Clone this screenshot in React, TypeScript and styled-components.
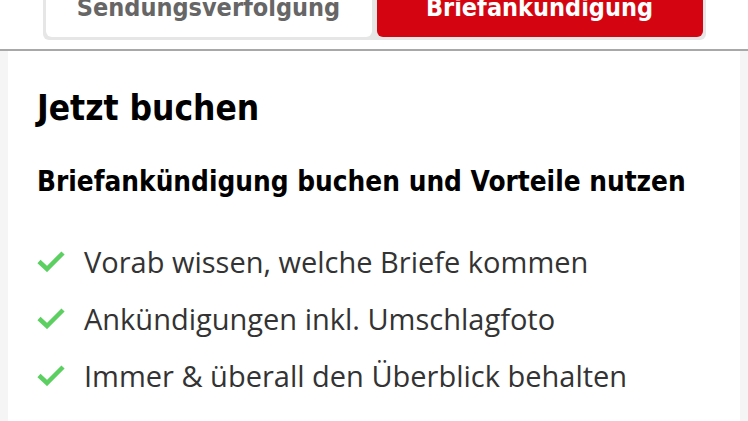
import React from "react";
import styled, { createGlobalStyle } from "styled-components";

const GlobalStyle = createGlobalStyle`
  html, body {
    margin: 0;
    padding: 0;
    background: #f5f5f5;
    overflow: hidden;
  }
`;

const headFont = `"DejaVu Sans Condensed", "DejaVu Sans", sans-serif`;

const Page = styled.div`
  width: 748px;
  height: 421px;
  background: #f5f5f5;
  display: flex;
  flex-direction: column;
`;

const TopBar = styled.div`
  background: #ffffff;
  height: 51px;
  border-bottom: 2px solid #a8a8a8;
  display: flex;
  justify-content: center;
  align-items: flex-start;
  box-sizing: border-box;
`;

const Segmented = styled.div`
  width: 663px;
  height: 40px;
  padding: 0 3px 3px 3px;
  background: #e6e6e6;
  border-radius: 0 0 6px 6px;
  display: flex;
  gap: 5px;
  box-sizing: border-box;
`;

const Tab = styled.div<{ $active?: boolean }>`
  flex: 1;
  border-radius: 0 0 6px 6px;
  background: ${(p) => (p.$active ? "#d40511" : "#ffffff")};
  color: ${(p) => (p.$active ? "#ffffff" : "#666666")};
  font-family: ${headFont};
  font-stretch: condensed;
  font-weight: 700;
  font-size: 25px;
  line-height: 30px;
  display: flex;
  align-items: flex-end;
  justify-content: center;
  padding-bottom: 14px;
  box-sizing: border-box;
  overflow: hidden;
`;

const Card = styled.div`
  flex: 1;
  margin: 0 8px;
  background: #ffffff;
  padding: 35px 29px 0 29px;
`;

const Title = styled.h1`
  margin: 0;
  font-family: ${headFont};
  font-stretch: condensed;
  font-weight: 700;
  font-size: 35px;
  color: #000000;
  line-height: 44px;
`;

const Subtitle = styled.h2`
  margin: 35px 0 0 0;
  font-family: ${headFont};
  font-stretch: condensed;
  font-weight: 700;
  font-size: 27.7px;
  color: #000000;
  line-height: 34px;
  white-space: nowrap;
`;

const List = styled.ul`
  list-style: none;
  margin: 43px 0 0 0;
  padding: 0;
  display: flex;
  flex-direction: column;
  gap: 19px;
`;

const Item = styled.li`
  display: flex;
  align-items: center;
  gap: 19px;
  height: 38px;
  font-family: "Open Sans", sans-serif;
  font-size: 29px;
  color: #333333;
`;

const Check = () => (
  <svg width="28" height="22" viewBox="0 0 28 22">
    <path
      d="M2 11.5 L10 19 L26 3"
      fill="none"
      stroke="#5ccf61"
      strokeWidth="4.5"
      strokeLinecap="butt"
      strokeLinejoin="miter"
    />
  </svg>
);

const benefits = [
  "Vorab wissen, welche Briefe kommen",
  "Ankündigungen inkl. Umschlagfoto",
  "Immer & überall den Überblick behalten",
];

export default function App() {
  return (
    <Page>
      <GlobalStyle />
      <TopBar>
        <Segmented>
          <Tab>Sendungsverfolgung</Tab>
          <Tab $active>Briefankündigung</Tab>
        </Segmented>
      </TopBar>
      <Card>
        <Title>Jetzt buchen</Title>
        <Subtitle>Briefankündigung buchen und Vorteile nutzen</Subtitle>
        <List>
          {benefits.map((b) => (
            <Item key={b}>
              <Check />
              {b}
            </Item>
          ))}
        </List>
      </Card>
    </Page>
  );
}
